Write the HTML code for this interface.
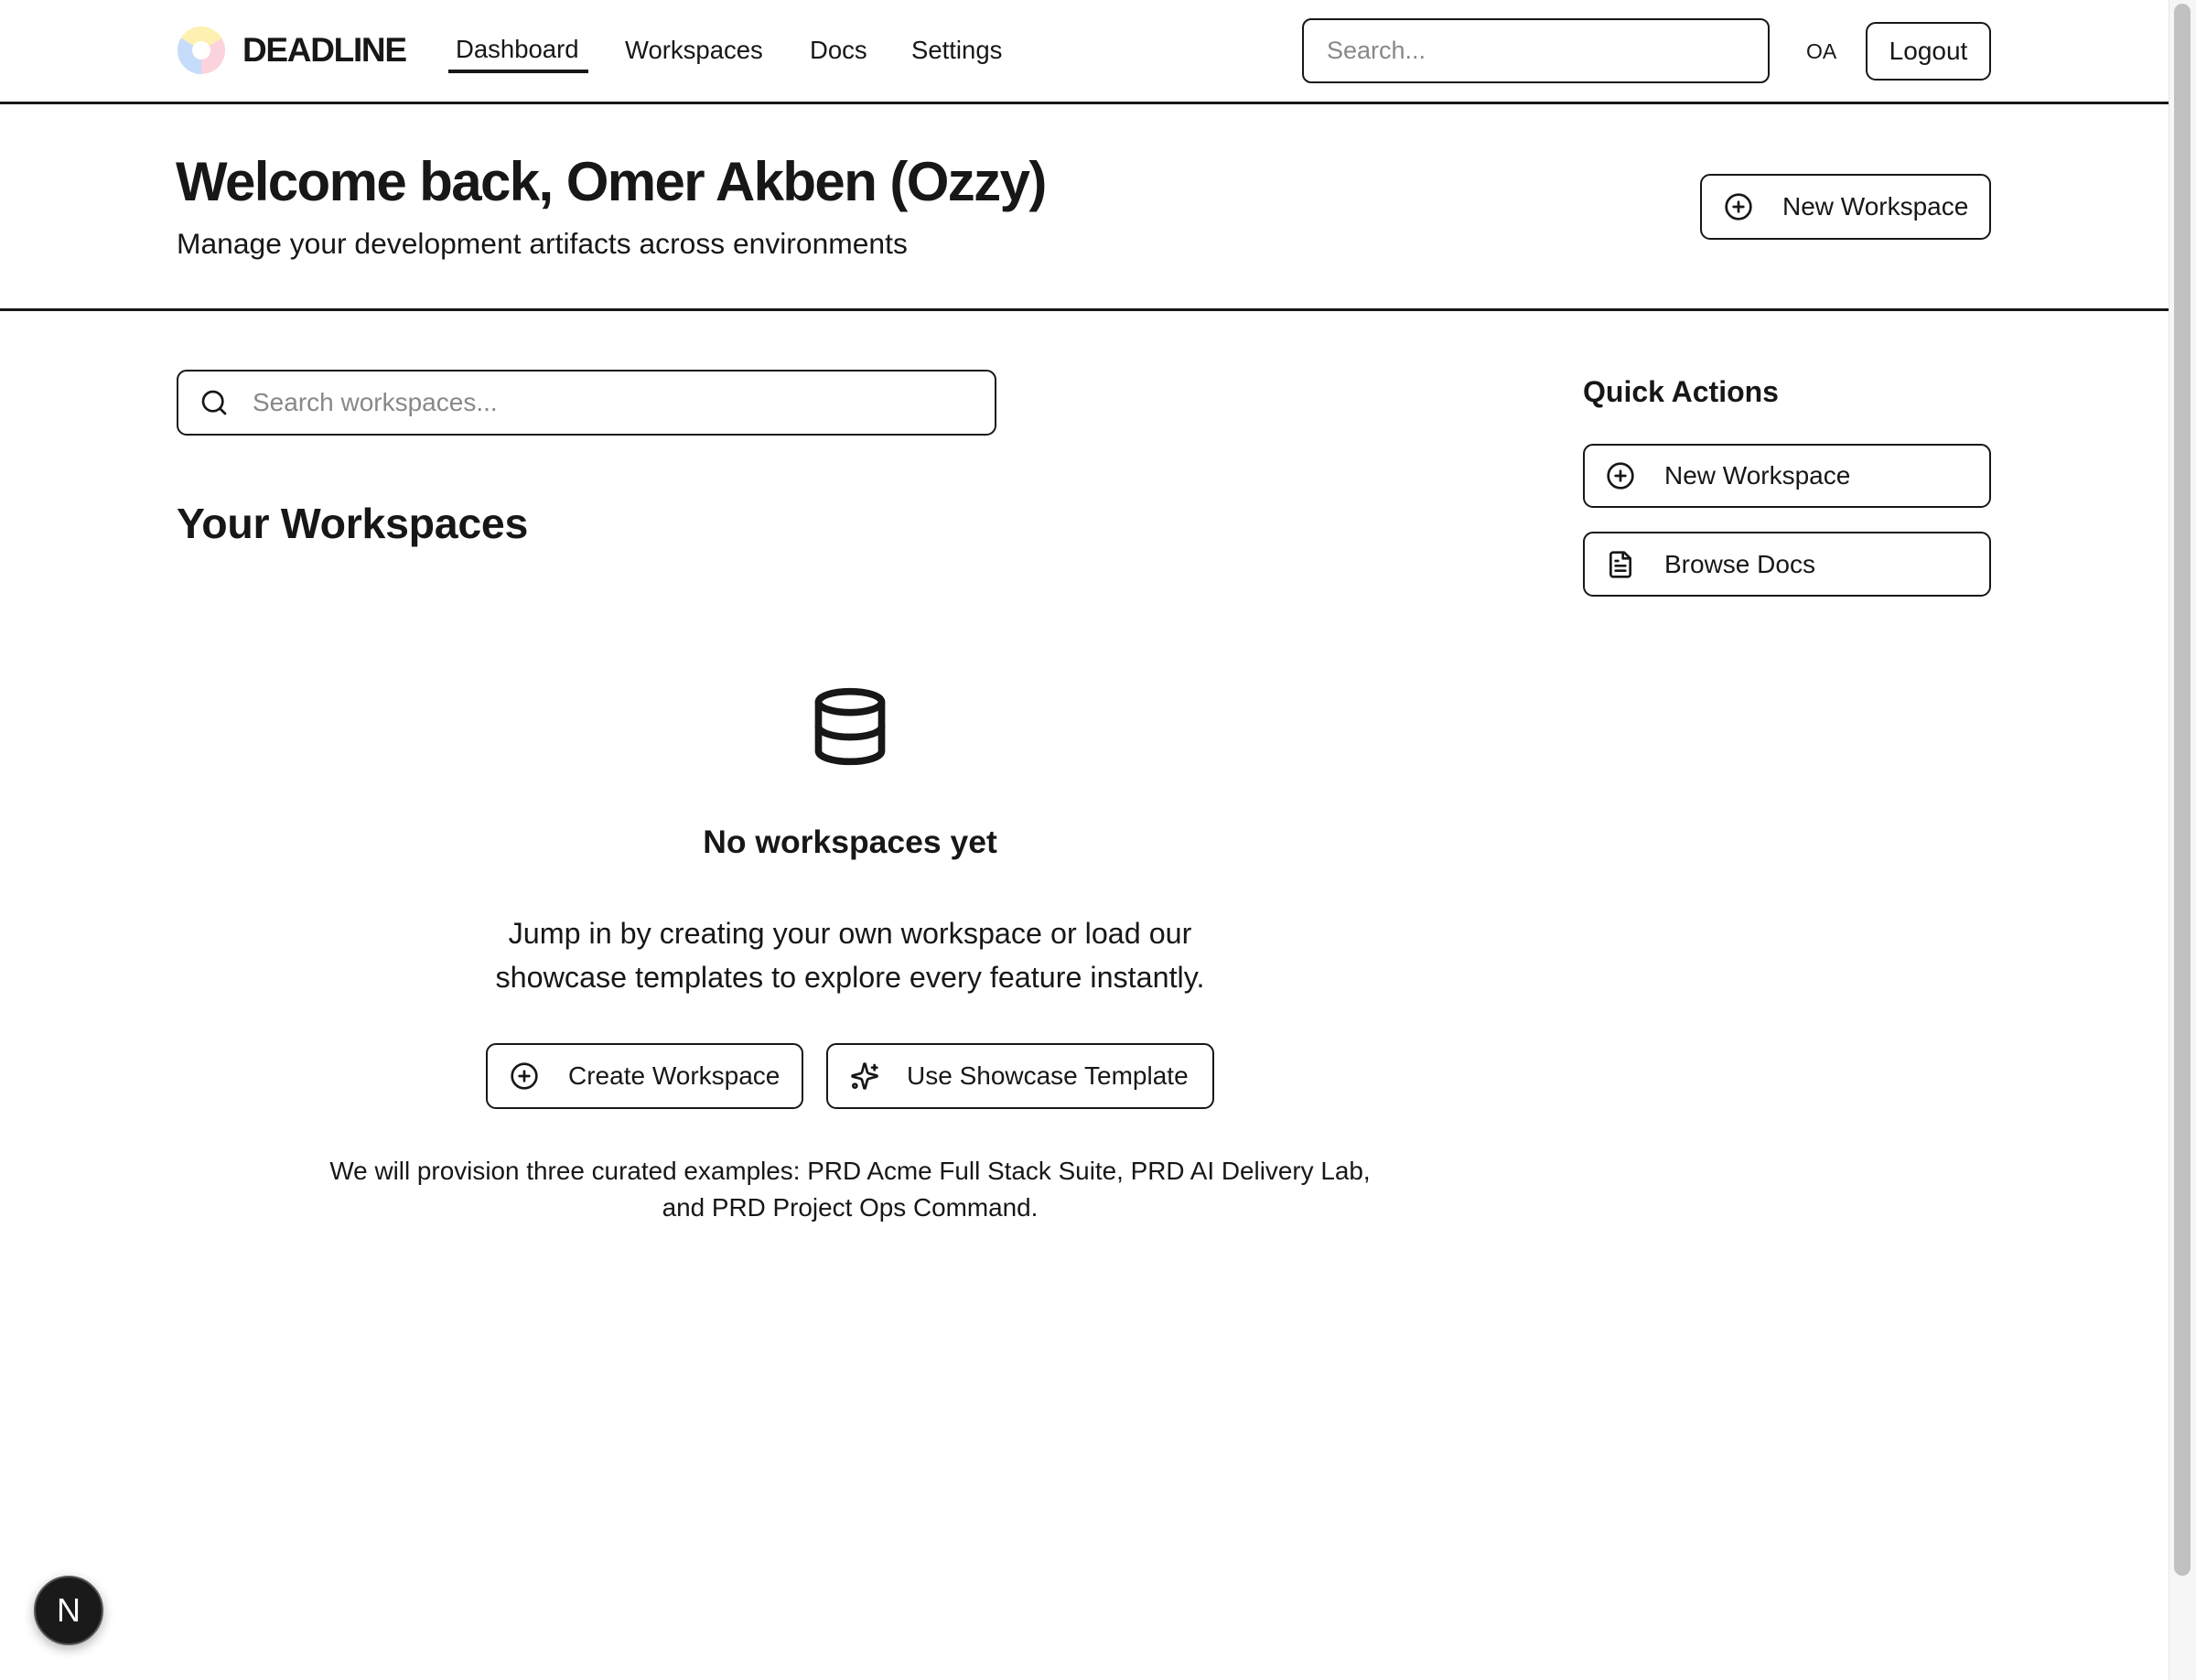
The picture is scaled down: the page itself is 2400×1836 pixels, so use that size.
<!DOCTYPE html>
<html><head><meta charset="utf-8"><style>
*{box-sizing:border-box;margin:0;padding:0}
body{width:2400px;height:1836px;background:#fff;font-family:"Liberation Sans",Arial,sans-serif;color:#171717;position:relative;overflow:hidden}
.a{position:absolute;white-space:nowrap}
.btn{position:absolute;border:2.5px solid #171717;border-radius:11px;background:#fff;display:flex;align-items:center}
.line{position:absolute;left:0;width:2370px;height:3px;background:#171717}
svg{display:block}
</style></head><body>
<svg class="a" style="left:194px;top:29px" width="52" height="52" viewBox="0 0 52 52">
<circle cx="26" cy="26" r="18" fill="none" stroke="#fdf0b0" stroke-width="16" stroke-dasharray="38 200" transform="rotate(-150 26 26)"/>
<circle cx="26" cy="26" r="18" fill="none" stroke="#fbd3dc" stroke-width="16" stroke-dasharray="38 200" transform="rotate(-30 26 26)"/>
<circle cx="26" cy="26" r="18" fill="none" stroke="#c5dcfb" stroke-width="16" stroke-dasharray="38 200" transform="rotate(90 26 26)"/>
</svg>
<div class="a" style="left:265px;top:34px;font-size:37px;font-weight:bold;letter-spacing:-1.3px">DEADLINE</div>
<div class="a" style="left:498px;top:38px;font-size:27.5px">Dashboard</div>
<div class="a" style="left:490px;top:76px;width:153px;height:4px;background:#171717"></div>
<div class="a" style="left:683px;top:39px;font-size:27.5px">Workspaces</div>
<div class="a" style="left:885px;top:39px;font-size:27.5px">Docs</div>
<div class="a" style="left:996px;top:39px;font-size:27.5px">Settings</div>
<div class="a" style="left:1423px;top:20px;width:511px;height:71px;border:2.5px solid #171717;border-radius:10px"></div>
<div class="a" style="left:1450px;top:40px;font-size:27px;color:#888">Search...</div>
<div class="a" style="left:1974px;top:43px;font-size:23px">OA</div>
<div class="btn" style="left:2039px;top:24px;width:137px;height:64px;justify-content:center;font-size:28px">Logout</div>
<div class="line" style="top:111px"></div>
<div class="a" style="left:192px;top:164px;font-size:60px;font-weight:bold;letter-spacing:-1.6px">Welcome back, Omer Akben (Ozzy)</div>
<div class="a" style="left:193px;top:248px;font-size:31.8px">Manage your development artifacts across environments</div>
<div class="btn" style="left:1858px;top:190px;width:318px;height:72px;font-size:28px">
<svg style="margin-left:24px" width="32" height="32" viewBox="0 0 24 24" fill="none" stroke="#171717" stroke-width="2" stroke-linecap="round"><circle cx="12" cy="12" r="10"/><path d="M8 12h8M12 8v8"/></svg>
<span style="margin-left:32px">New Workspace</span></div>
<div class="line" style="top:337px"></div>
<div class="btn" style="left:193px;top:404px;width:896px;height:72px;font-size:28px;color:#888">
<svg style="margin-left:23px" width="32" height="32" viewBox="0 0 24 24" fill="none" stroke="#171717" stroke-width="2" stroke-linecap="round"><circle cx="11" cy="11" r="8"/><path d="M21 21l-4.3-4.3"/></svg>
<span style="margin-left:26px">Search workspaces...</span></div>
<div class="a" style="left:193px;top:545px;font-size:46.5px;font-weight:bold;letter-spacing:-0.3px">Your Workspaces</div>
<div class="a" style="left:1730px;top:410px;font-size:32px;font-weight:bold">Quick Actions</div>
<div class="btn" style="left:1730px;top:485px;width:446px;height:70px;font-size:28px">
<svg style="margin-left:23px" width="32" height="32" viewBox="0 0 24 24" fill="none" stroke="#171717" stroke-width="2" stroke-linecap="round"><circle cx="12" cy="12" r="10"/><path d="M8 12h8M12 8v8"/></svg>
<span style="margin-left:32px">New Workspace</span></div>
<div class="btn" style="left:1730px;top:581px;width:446px;height:71px;font-size:28px">
<svg style="margin-left:23px" width="32" height="32" viewBox="0 0 24 24" fill="none" stroke="#171717" stroke-width="2" stroke-linecap="round" stroke-linejoin="round"><path d="M15 2H6a2 2 0 0 0-2 2v16a2 2 0 0 0 2 2h12a2 2 0 0 0 2-2V7z"/><path d="M14 2v5h6M16 13H8M16 17H8M10 9H8"/></svg>
<span style="margin-left:32px">Browse Docs</span></div>
<svg class="a" style="left:883px;top:748px" width="92" height="92" viewBox="0 0 24 24" fill="none" stroke="#171717" stroke-width="2" stroke-linecap="round"><ellipse cx="12" cy="5" rx="9" ry="3"/><path d="M3 5v14a9 3 0 0 0 18 0V5"/><path d="M3 12a9 3 0 0 0 18 0"/></svg>
<div class="a" style="left:529px;width:800px;text-align:center;top:900px;font-size:35.5px;font-weight:bold">No workspaces yet</div>
<div class="a" style="left:429px;width:1000px;text-align:center;top:996px;font-size:32.3px;line-height:48px;white-space:normal">Jump in by creating your own workspace or load our<br>showcase templates to explore every feature instantly.</div>
<div class="btn" style="left:531px;top:1140px;width:347px;height:72px;font-size:28px">
<svg style="margin-left:24px" width="32" height="32" viewBox="0 0 24 24" fill="none" stroke="#171717" stroke-width="2" stroke-linecap="round"><circle cx="12" cy="12" r="10"/><path d="M8 12h8M12 8v8"/></svg>
<span style="margin-left:32px">Create Workspace</span></div>
<div class="btn" style="left:903px;top:1140px;width:424px;height:72px;font-size:28px">
<svg style="margin-left:24px" width="32" height="32" viewBox="0 0 24 24" fill="none" stroke="#171717" stroke-width="2" stroke-linecap="round" stroke-linejoin="round"><path d="M9.9 15.5A2 2 0 0 0 8.5 14.1L2.4 12.5a.5.5 0 0 1 0-1l6.1-1.6A2 2 0 0 0 9.9 8.5l1.6-6.1a.5.5 0 0 1 1 0l1.6 6.1a2 2 0 0 0 1.4 1.4l6.1 1.6a.5.5 0 0 1 0 1l-6.1 1.6a2 2 0 0 0-1.4 1.4l-1.6 6.1a.5.5 0 0 1-1 0z"/><path d="M20 3v4M22 5h-4"/><circle cx="4" cy="20" r="1.5"/></svg>
<span style="margin-left:30px">Use Showcase Template</span></div>
<div class="a" style="left:229px;width:1400px;text-align:center;top:1260px;font-size:27.9px;line-height:40px;white-space:normal">We will provision three curated examples: PRD Acme Full Stack Suite, PRD AI Delivery Lab,<br>and PRD Project Ops Command.</div>
<div class="a" style="left:2370px;top:0;width:30px;height:1836px;background:#f6f6f6;border-left:1px solid #e6e6e6"></div>
<div class="a" style="left:2376px;top:4px;width:18px;height:1718px;background:#c1c1c1;border-radius:9px"></div>
<div class="a" style="left:37px;top:1722px;width:76px;height:76px;border-radius:50%;background:#1a1a1a;border:2px solid #555;box-shadow:0 4px 12px rgba(0,0,0,.3);color:#fff;font-size:36px;display:flex;align-items:center;justify-content:center">N</div>
</body></html>
